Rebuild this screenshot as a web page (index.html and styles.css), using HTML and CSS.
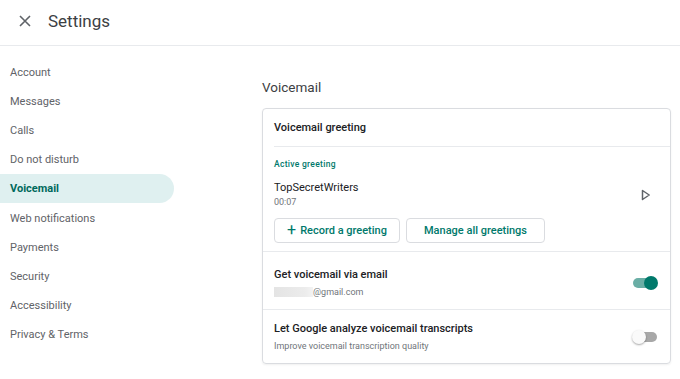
FILE: index.html
```html
<!DOCTYPE html>
<html>
<head>
<meta charset="utf-8">
<link rel="stylesheet" href="styles.css">
</head>
<body>
<header class="topbar">
  <svg class="close" width="14" height="14" viewBox="0 0 14 14"><path d="M2 2L12 12M12 2L2 12" stroke="#5f6368" stroke-width="1.6" fill="none"/></svg>
  <span class="title">Settings</span>
</header>
<div class="layout">
  <nav class="nav">
    <div class="nav-item">Account</div>
    <div class="nav-item">Messages</div>
    <div class="nav-item">Calls</div>
    <div class="nav-item">Do not disturb</div>
    <div class="nav-item active">Voicemail</div>
    <div class="nav-item">Web notifications</div>
    <div class="nav-item">Payments</div>
    <div class="nav-item">Security</div>
    <div class="nav-item">Accessibility</div>
    <div class="nav-item">Privacy &amp; Terms</div>
  </nav>
  <main class="main">
    <h2 class="section-title">Voicemail</h2>
    <div class="card">
      <div class="card-head">Voicemail greeting</div>
      <div class="greeting">
        <div class="label">Active greeting</div>
        <div class="greeting-row">
          <div>
            <div class="name">TopSecretWriters</div>
            <div class="dur">00:07</div>
          </div>
          <svg class="play" width="10" height="12" viewBox="0 0 10 12"><path d="M1.5 1.5L8.2 6L1.5 10.5Z" stroke="#5f6368" stroke-width="1.5" fill="none" stroke-linejoin="round"/></svg>
        </div>
        <div class="buttons">
          <button class="btn"><span class="plus">+</span>Record a greeting</button>
          <button class="btn wide">Manage all greetings</button>
        </div>
      </div>
      <div class="row first">
        <div>
          <div class="row-title">Get voicemail via email</div>
          <div class="row-sub"><span class="blur"></span>@gmail.com</div>
        </div>
        <div class="toggle on"><span class="thumb"></span></div>
      </div>
      <div class="row last">
        <div>
          <div class="row-title">Let Google analyze voicemail transcripts</div>
          <div class="row-sub">Improve voicemail transcription quality</div>
        </div>
        <div class="toggle off"><span class="thumb"></span></div>
      </div>
    </div>
  </main>
</div>
</body>
</html>
```
FILE: styles.css
```css
* { box-sizing: border-box; }
body {
  margin: 0;
  font-family: Roboto, "Liberation Sans", sans-serif;
  color: #3c4043;
  background: #fff;
  width: 680px;
  height: 379px;
  overflow: hidden;
}
.topbar {
  height: 46px;
  border-bottom: 1px solid #e8eaed;
  display: flex;
  align-items: center;
  padding-left: 18px;
  padding-bottom: 3px;
}
.close { margin-right: 16px; }
.title {
  font-size: 17px;
  color: #3c4043;
}
.layout { display: flex; }
.nav {
  width: 174px;
  padding-top: 12px;
  flex-shrink: 0;
}
.nav-item {
  height: 29.1px;
  display: flex;
  align-items: center;
  padding-left: 10px;
  font-size: 11px;
  color: #5f6368;
}
.nav-item.active {
  background: #dff0f0;
  border-radius: 0 15px 15px 0;
  color: #00695c;
  font-weight: 700;
}
.main {
  margin-left: 88px;
  width: 409px;
}
.section-title {
  margin: 0;
  font-size: 13.5px;
  font-weight: 400;
  color: #3c4043;
  padding-top: 33px;
  height: 62px;
}
.card {
  border: 1px solid #dadce0;
  border-radius: 4px;
  box-shadow: 0 1px 2px rgba(60,64,67,0.08);
}
.card-head {
  height: 38px;
  display: flex;
  align-items: center;
  margin-left: 11px;
  font-size: 11px;
  font-weight: 500;
  color: #202124;
  border-bottom: 1px solid #e8eaed;
}
.greeting {
  padding: 12px 11px 8px 11px;
  border-bottom: 1px solid #e8eaed;
}
.label {
  font-size: 8.5px;
  font-weight: 500;
  color: #00796b;
  letter-spacing: 0.3px;
  height: 12px;
}
.greeting-row {
  display: flex;
  justify-content: space-between;
  align-items: center;
  margin-top: 10px;
  padding-right: 8px;
}
.name { font-size: 11px; color: #202124; }
.dur { font-size: 9px; color: #70757a; margin-top: 3px; }
.play { margin-top: 2px; }
.buttons {
  display: flex;
  gap: 6px;
  margin-top: 11px;
}
.btn {
  height: 25px;
  border: 1px solid #dadce0;
  border-radius: 4px;
  background: #fff;
  font-family: Roboto, "Liberation Sans", sans-serif;
  font-size: 11px;
  font-weight: 500;
  color: #00796b;
  padding: 0 10px;
  width: 126px;
  display: flex;
  align-items: center;
  justify-content: center;
}
.btn.wide { width: 139px; }
.plus { font-size: 16px; font-weight: 400; margin-right: 4px; line-height: 1; margin-top: -1px; }
.row {
  display: flex;
  justify-content: space-between;
  align-items: center;
  padding: 0 12px 0 11px;
  height: 58px;
  border-bottom: 1px solid #e8eaed;
}
.row.first { padding-top: 4px; }
.row.last { border-bottom: none; height: 53px; }
.row-title { font-size: 11px; font-weight: 500; color: #202124; }
.row-sub {
  font-size: 9px;
  color: #70757a;
  margin-top: 6px;
  display: flex;
  align-items: center;
}
.blur {
  display: inline-block;
  width: 39px;
  height: 10px;
  background: linear-gradient(90deg, #e4e4e4, #ececec 80%, #f3f3f3);
}
.toggle {
  position: relative;
  width: 26px;
  height: 16px;
  display: flex;
  align-items: center;
}
.toggle::before {
  content: "";
  display: block;
  width: 24px;
  height: 10px;
  border-radius: 5px;
  margin-left: 1px;
}
.toggle.on::before { background: #6aaea5; }
.toggle.off::before { background: #a8a8a8; }
.thumb {
  position: absolute;
  top: 1px;
  width: 14px;
  height: 14px;
  border-radius: 50%;
}
.toggle.on .thumb { right: 0; background: #00796b; }
.toggle.off .thumb { left: 0; background: #fafafa; box-shadow: 0 1px 2px rgba(0,0,0,0.35); }
```
